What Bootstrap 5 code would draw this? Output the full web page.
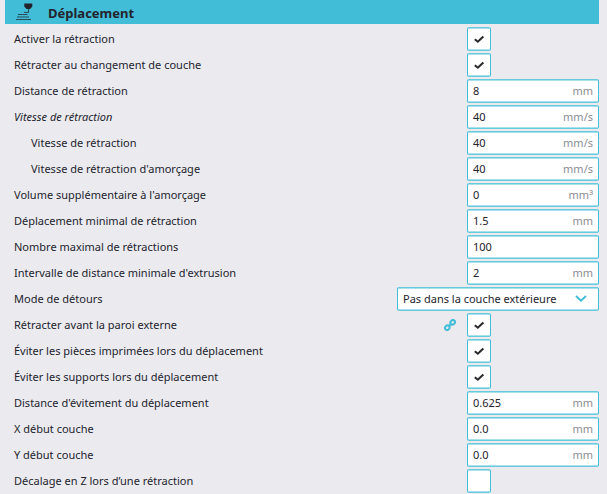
<!DOCTYPE html>
<html lang="fr">
<head>
<meta charset="utf-8">
<meta name="viewport" content="width=device-width, initial-scale=1">
<title>Déplacement</title>
<link href="https://cdn.jsdelivr.net/npm/bootstrap@5.3.0/dist/css/bootstrap.min.css" rel="stylesheet">
<style>
  :root { --accent: #42bdd8; --ink: #23232d; --unit: #8c8c94; }
  body { background: #ebebef; color: var(--ink); font: 11px/16px "Noto Sans", sans-serif; }
  .settings { padding: 0 8px 0 5px; }
  .section-head { background: var(--accent); height: 24px; margin-bottom: 2px; padding-left: 11px; gap: 15px; }
  .section-head h1 { font-size: 13px; line-height: 20px; padding-top: 2px; }
  .setting { height: 26px; padding-left: 9px; }
  .setting.sub { padding-left: 26px; }
  .control { width: 132px; height: 24px; }
  .field, .form-check-input.tick, .form-select.mode {
    background-color: #fff; border: 1px solid; border-color: #68cadf var(--accent); border-radius: 2px;
    box-shadow: inset 0 1px #a8e1ec, inset 0 -1px #a8e1ec;
  }
  .field input { color: var(--ink); padding: 0 0 0 5px; min-width: 0; background: none; outline: 0; }
  .field label { color: var(--unit); padding-right: 5px; }
  .form-check-input.tick { width: 24px; height: 24px; margin: 0; }
  .form-check-input.tick:checked { background-size: 22px 22px; background-image: url("data:image/svg+xml,%3csvg xmlns='http://www.w3.org/2000/svg' viewBox='0 0 22 22'%3e%3cpath d='M6.8 11.2l3 2.5 5.6-5.3' fill='none' stroke='%232b2b30' stroke-width='2.1'/%3e%3c/svg%3e"); }
  .form-select.mode { width: 202px; height: 24px; padding: 0 30px 0 5px; font-size: 11px; line-height: 22px; color: var(--ink); background-position: right 11px center; background-size: 12px 8px; background-image: url("data:image/svg+xml,%3csvg xmlns='http://www.w3.org/2000/svg' viewBox='0 0 12 8'%3e%3cpath d='M1 1l5 4.6L11 1' fill='none' stroke='%2342bdd8' stroke-width='1.9'/%3e%3c/svg%3e"); }
  .link-btn { margin-right: 11px; line-height: 0; }
</style>
<script src="https://cdn.jsdelivr.net/npm/bootstrap@5.3.0/dist/js/bootstrap.bundle.min.js"></script>
</head>
<body>
<main class="settings">
  <header class="section-head d-flex align-items-center">
    <svg width="17" height="20" viewBox="0 0 17 20" aria-hidden="true">
      <path d="M8.3 1.5h8v3l-2.2 2.4h-3.6L8.3 4.5z" fill="#23232d"/>
      <path d="M12.6 7v3.4H8" fill="none" stroke="#23232d" stroke-opacity=".8"/>
      <path d="M2 12.5h9.5M1 15h12M0 17.5h15" fill="none" stroke="#23232d" stroke-opacity=".75"/>
    </svg>
    <h1 class="m-0 fw-bold">Déplacement</h1>
  </header>
  <form>
    <div class="setting d-flex align-items-center justify-content-between">
      <label for="s1">Activer la rétraction</label>
      <div class="control d-flex"><input class="form-check-input tick" type="checkbox" id="s1" checked></div>
    </div>
    <div class="setting d-flex align-items-center justify-content-between">
      <label for="s2">Rétracter au changement de couche</label>
      <div class="control d-flex"><input class="form-check-input tick" type="checkbox" id="s2" checked></div>
    </div>
    <div class="setting d-flex align-items-center justify-content-between">
      <label for="s3">Distance de rétraction</label>
      <div class="control field d-flex align-items-center"><input class="border-0 flex-grow-1" type="text" id="s3" value="8"><label for="s3">mm</label></div>
    </div>
    <div class="setting d-flex align-items-center justify-content-between">
      <label for="s4" class="fst-italic">Vitesse de rétraction</label>
      <div class="control field d-flex align-items-center"><input class="border-0 flex-grow-1" type="text" id="s4" value="40"><label for="s4">mm/s</label></div>
    </div>
    <div class="setting sub d-flex align-items-center justify-content-between">
      <label for="s5">Vitesse de rétraction</label>
      <div class="control field d-flex align-items-center"><input class="border-0 flex-grow-1" type="text" id="s5" value="40"><label for="s5">mm/s</label></div>
    </div>
    <div class="setting sub d-flex align-items-center justify-content-between">
      <label for="s6">Vitesse de rétraction d'amorçage</label>
      <div class="control field d-flex align-items-center"><input class="border-0 flex-grow-1" type="text" id="s6" value="40"><label for="s6">mm/s</label></div>
    </div>
    <div class="setting d-flex align-items-center justify-content-between">
      <label for="s7">Volume supplémentaire à l'amorçage</label>
      <div class="control field d-flex align-items-center"><input class="border-0 flex-grow-1" type="text" id="s7" value="0"><label for="s7">mm³</label></div>
    </div>
    <div class="setting d-flex align-items-center justify-content-between">
      <label for="s8">Déplacement minimal de rétraction</label>
      <div class="control field d-flex align-items-center"><input class="border-0 flex-grow-1" type="text" id="s8" value="1.5"><label for="s8">mm</label></div>
    </div>
    <div class="setting d-flex align-items-center justify-content-between">
      <label for="s9">Nombre maximal de rétractions</label>
      <div class="control field d-flex align-items-center"><input class="border-0 flex-grow-1" type="text" id="s9" value="100"></div>
    </div>
    <div class="setting d-flex align-items-center justify-content-between">
      <label for="s10">Intervalle de distance minimale d'extrusion</label>
      <div class="control field d-flex align-items-center"><input class="border-0 flex-grow-1" type="text" id="s10" value="2"><label for="s10">mm</label></div>
    </div>
    <div class="setting d-flex align-items-center justify-content-between">
      <label for="s11">Mode de détours</label>
      <select class="form-select mode" id="s11"><option>Pas dans la couche extérieure</option></select>
    </div>
    <div class="setting d-flex align-items-center">
      <label for="s12" class="me-auto">Rétracter avant la paroi externe</label>
      <button type="button" class="link-btn border-0 bg-transparent p-0" aria-label="Valeur liée">
        <svg width="12" height="12" viewBox="0 0 12 12" fill="none" stroke="#42bdd8" stroke-width="2" aria-hidden="true">
          <ellipse cx="8.7" cy="3.3" rx="2.4" ry="2.1" transform="rotate(-40 8.7 3.3)"/>
          <ellipse cx="3.3" cy="8.7" rx="2.4" ry="2.1" transform="rotate(-50 3.3 8.7)"/>
          <path d="M4.8 7.2l2.4-2.4"/>
        </svg>
      </button>
      <div class="control d-flex"><input class="form-check-input tick" type="checkbox" id="s12" checked></div>
    </div>
    <div class="setting d-flex align-items-center justify-content-between">
      <label for="s13">Éviter les pièces imprimées lors du déplacement</label>
      <div class="control d-flex"><input class="form-check-input tick" type="checkbox" id="s13" checked></div>
    </div>
    <div class="setting d-flex align-items-center justify-content-between">
      <label for="s14">Éviter les supports lors du déplacement</label>
      <div class="control d-flex"><input class="form-check-input tick" type="checkbox" id="s14" checked></div>
    </div>
    <div class="setting d-flex align-items-center justify-content-between">
      <label for="s15">Distance d'évitement du déplacement</label>
      <div class="control field d-flex align-items-center"><input class="border-0 flex-grow-1" type="text" id="s15" value="0.625"><label for="s15">mm</label></div>
    </div>
    <div class="setting d-flex align-items-center justify-content-between">
      <label for="s16">X début couche</label>
      <div class="control field d-flex align-items-center"><input class="border-0 flex-grow-1" type="text" id="s16" value="0.0"><label for="s16">mm</label></div>
    </div>
    <div class="setting d-flex align-items-center justify-content-between">
      <label for="s17">Y début couche</label>
      <div class="control field d-flex align-items-center"><input class="border-0 flex-grow-1" type="text" id="s17" value="0.0"><label for="s17">mm</label></div>
    </div>
    <div class="setting d-flex align-items-center justify-content-between">
      <label for="s18">Décalage en Z lors d’une rétraction</label>
      <div class="control d-flex"><input class="form-check-input tick" type="checkbox" id="s18"></div>
    </div>
  </form>
</main>
</body>
</html>
